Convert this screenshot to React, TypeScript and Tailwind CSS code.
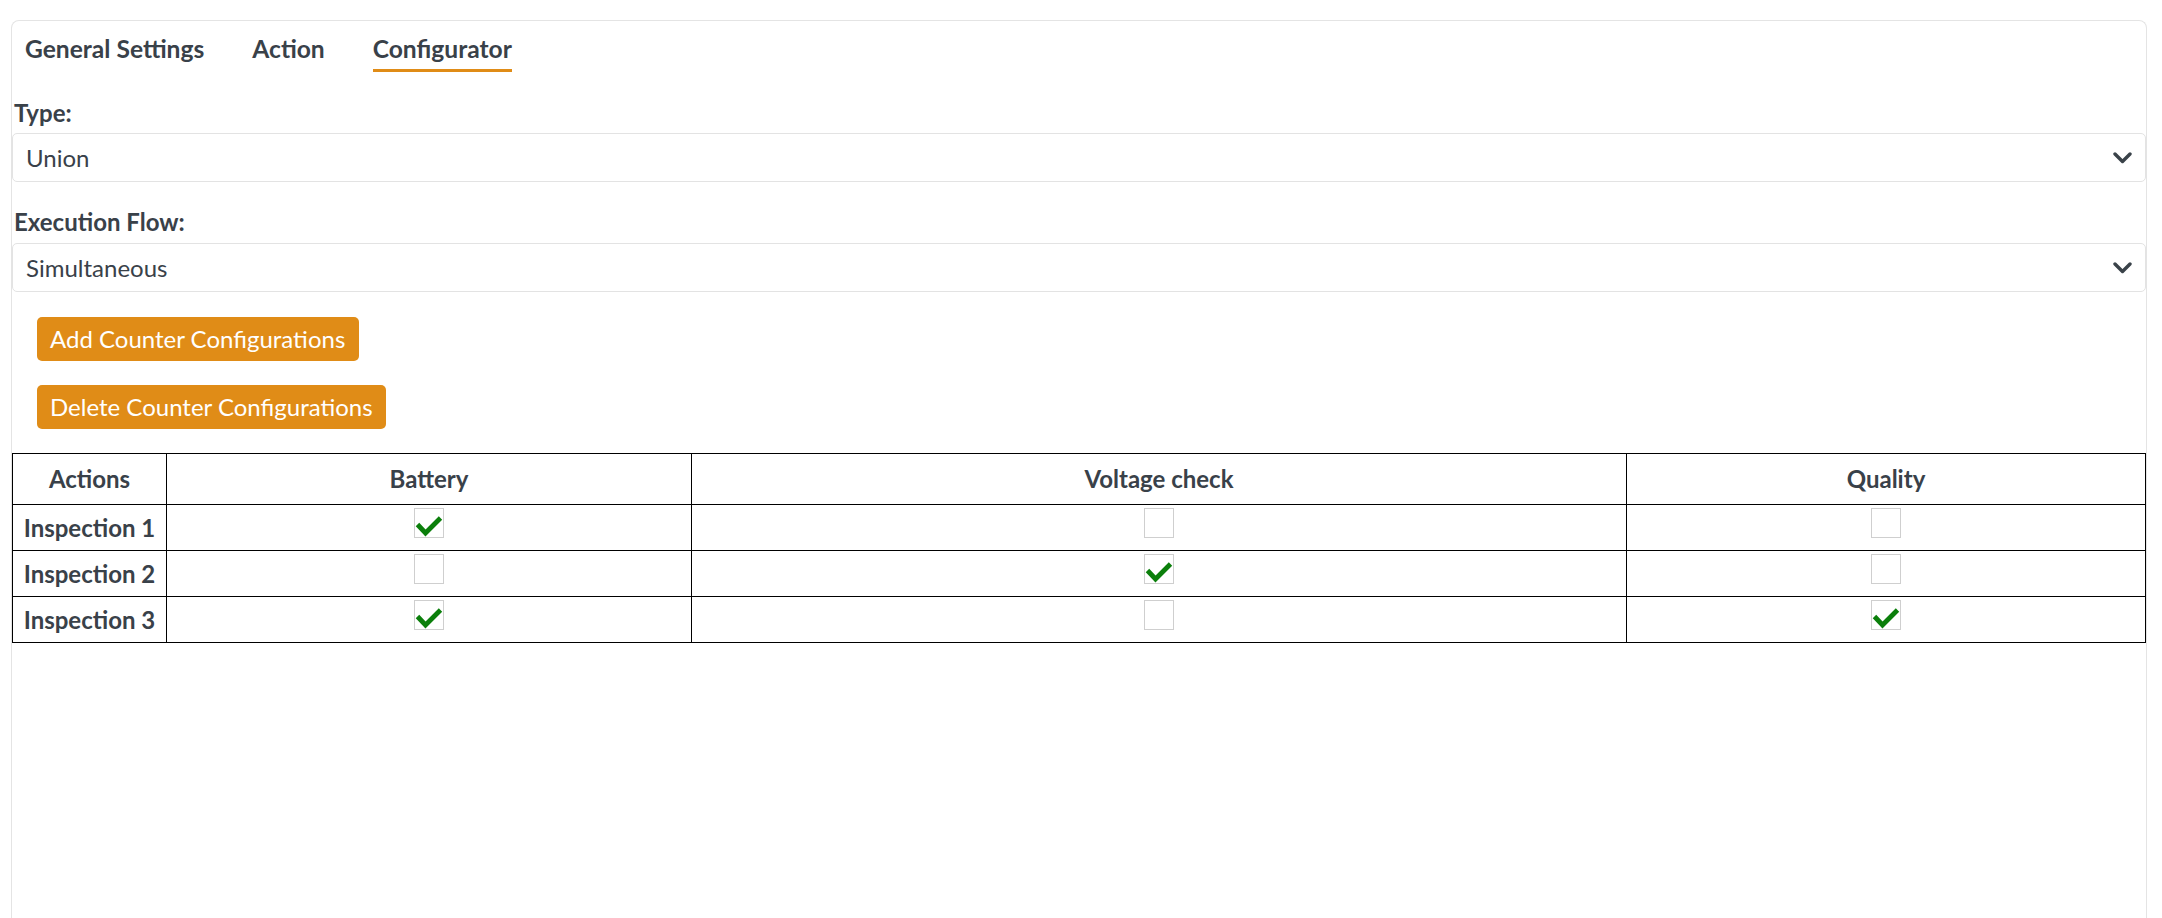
import React from 'react';

const tabs = ['General Settings', 'Action', 'Configurator'];

const columns = [
  { label: 'Battery', width: 'w-[525px]' },
  { label: 'Voltage check', width: 'w-[935px]' },
  { label: 'Quality', width: 'w-[519px]' },
];

const rows = [
  { name: 'Inspection 1', checks: [true, false, false] },
  { name: 'Inspection 2', checks: [false, true, false] },
  { name: 'Inspection 3', checks: [true, false, true] },
];

function Chevron() {
  return (
    <svg width="19" height="12" viewBox="0 0 19 12" className="text-[#3a4249]">
      <polyline
        points="2,2 9.5,9.5 17,2"
        fill="none"
        stroke="currentColor"
        strokeWidth="3.4"
        strokeLinecap="round"
        strokeLinejoin="round"
      />
    </svg>
  );
}

function Select({ value }: { value: string }) {
  return (
    <div className="h-[49px] w-full flex items-center justify-between border border-[#e3e3e3] rounded-[5px] pl-[13px] pr-[13px] bg-white">
      <span className="leading-[28px]">{value}</span>
      <Chevron />
    </div>
  );
}

function Checkbox({ checked }: { checked: boolean }) {
  return (
    <div className="w-[30px] h-[30px] border border-[#cfcfcf] bg-white mx-auto">
      {checked && (
        <svg width="28" height="28" viewBox="0 0 28 28">
          <path d="M2.5 15.5 L10.5 24 L25.5 9" fill="none" stroke="#0b7f0b" strokeWidth="4.8" />
        </svg>
      )}
    </div>
  );
}

export default function App() {
  return (
    <div
      className="min-h-screen bg-white pt-[20px] pl-[11px] pr-[15px] text-[24px] text-[#394149]"
      style={{ fontFamily: 'Lato, "Open Sans", sans-serif' }}
    >
      <div className="border border-b-0 border-[#e4e4e4] rounded-t-[8px] min-h-[898px]">
        {/* Tabs */}
        <div className="flex gap-[48px] pl-[13px] pt-[14px]">
          {tabs.map((t) => (
            <div
              key={t}
              className={`font-bold text-[24.6px] leading-[28px] pb-[6px] border-b-[3px] ${
                t === 'Configurator' ? 'border-[#e08c17]' : 'border-transparent'
              }`}
            >
              {t}
            </div>
          ))}
        </div>

        {/* Type */}
        <div className="mt-[27px] pl-[2px] font-bold leading-[28px]">Type:</div>
        <div className="mt-[6px]">
          <Select value="Union" />
        </div>

        {/* Execution flow */}
        <div className="mt-[26px] pl-[2px] font-bold leading-[28px]">Execution Flow:</div>
        <div className="mt-[7px]">
          <Select value="Simultaneous" />
        </div>

        {/* Buttons */}
        <div className="flex flex-col items-start gap-[24px] mt-[25px] pl-[25px]">
          <button className="h-[44px] pl-[13px] pr-[14px] rounded-[5px] bg-[#e08c17] text-white leading-[28px]">
            Add Counter Configurations
          </button>
          <button className="h-[44px] pl-[13px] pr-[13px] rounded-[5px] bg-[#e08c17] text-white leading-[28px]">
            Delete Counter Configurations
          </button>
        </div>

        {/* Table */}
        <table className="mt-[24px] w-full border-collapse border border-black">
          <thead>
            <tr className="h-[51px]">
              <th className="w-[154px] border border-black font-bold text-center">Actions</th>
              {columns.map((c) => (
                <th key={c.label} className={`${c.width} border border-black font-bold text-center`}>
                  {c.label}
                </th>
              ))}
            </tr>
          </thead>
          <tbody>
            {rows.map((r) => (
              <tr key={r.name} className="h-[46px]">
                <td className="border border-black font-bold text-center px-[6px] whitespace-nowrap">{r.name}</td>
                {r.checks.map((c, i) => (
                  <td key={i} className="border border-black align-top pt-[3px]">
                    <Checkbox checked={c} />
                  </td>
                ))}
              </tr>
            ))}
          </tbody>
        </table>
      </div>
    </div>
  );
}
